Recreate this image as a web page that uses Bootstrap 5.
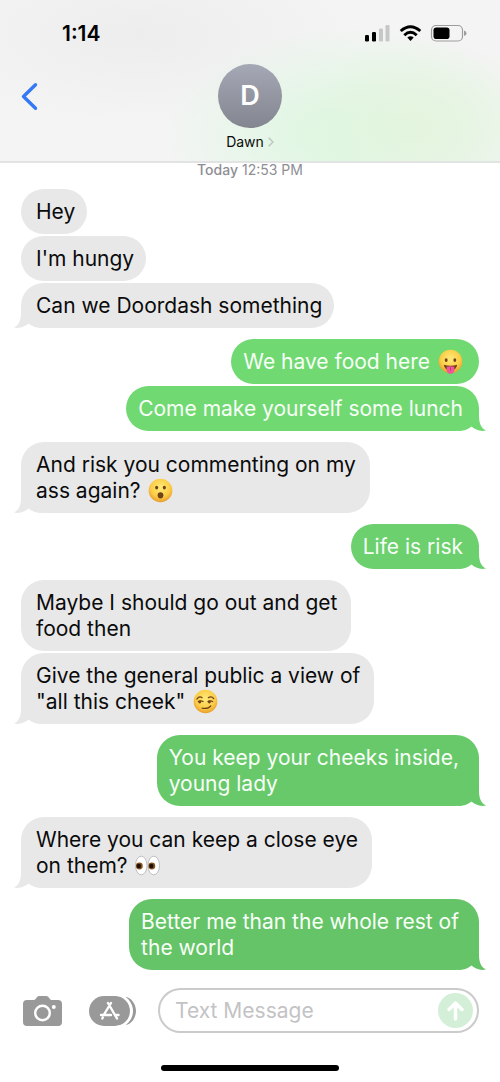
<!DOCTYPE html>
<html lang="en">
<head>
<meta charset="utf-8">
<meta name="viewport" content="width=device-width, initial-scale=1">
<title>Dawn</title>
<link href="https://cdn.jsdelivr.net/npm/bootstrap@5.3.0/dist/css/bootstrap.min.css" rel="stylesheet">
<style>
  body { font-family: Inter, "Liberation Sans", sans-serif; color: #0b0b0b; background: #fff; }
  .topbar {
    border-bottom: 2px solid #e1e4e2;
    background:
      radial-gradient(ellipse 130px 90px at 84% 78%, rgba(228,244,221,.9), transparent),
      radial-gradient(ellipse 190px 110px at 70% 84%, #dff7e2 20%, transparent),
      radial-gradient(ellipse 220px 90px at 28% 22%, #ededed, transparent),
      #f4f4f4;
  }
  .status { padding: 21px 33px 0 62px; height: 46px; }
  .clock { font-size: 21px; line-height: 26px; font-weight: 600; color: #000; }
  .nav-row { display: grid; grid-template-columns: 1fr auto 1fr; padding: 18px 20px 9px; }
  .back { height: 64px; width: 20px; }
  .avatar { width: 64px; height: 64px; font-size: 27px; background: linear-gradient(#a5a8b5, #83858f); }
  .contact { font-size: 14px; line-height: 20px; color: #0b0b0b; margin-top: 4px; }
  .stamp { font-size: 14px; line-height: 14px; color: #8e8e93; padding-bottom: 12px; }
  .thread { padding: 0 21px 18px; gap: 11px; }
  .group-box { gap: 2px; }
  .bubble {
    position: relative; isolation: isolate; font-size: 21px; line-height: 26px; margin: 0;
    padding: 10px 12px 9px 15px; border-radius: 23px; background: var(--tone);
    white-space: nowrap;
  }
  .got { --tone: #e8e8e9; }
  .sent { --tone: #70d972; color: #f8fff8; padding: 10px 16px 9px 12px; }
  .sent.deep-1 { --tone: #6bd06d; }
  .sent.deep-2 { --tone: #67c96a; }
  .sent.deep-3 { --tone: #65c467; }
  .got.wrapped { padding-right: 14px; }
  .sent.wrapped { padding-right: 20px; }
  .tail { position: absolute; z-index: -1; bottom: 0; width: 28px; height: 24px; fill: var(--tone); }
  .got .tail { left: -7px; }
  .sent .tail { right: -7px; transform: scaleX(-1); }
  .emoji { width: 25px; height: 25px; vertical-align: -5px; margin-left: 2px; }
  .composer { padding: 0 21px 32px 23px; }
  .tool { padding: 0; border: 0; background: none; line-height: 0; flex: none; }
  .apps { margin: 0 22px 0 27px; }
  .field { height: 45px; min-width: 0; border: 2px solid #cbcbcb; border-radius: 23px; padding: 0 4px 0 15px; }
  .field input { font-size: 21px; line-height: 26px; min-width: 0; color: #0b0b0b; }
  .field input::placeholder { color: #c3c3c5; opacity: 1; }
  .home { width: 178px; height: 6px; background: #000; margin-bottom: 11px; }
</style>
</head>
<body class="d-flex flex-column min-vh-100">

<svg width="0" height="0" class="position-absolute" aria-hidden="true">
  <defs>
    <radialGradient id="face" cx=".5" cy=".38" r=".62">
      <stop offset="0" stop-color="#ffea7a"/><stop offset=".65" stop-color="#fccd46"/><stop offset="1" stop-color="#e89b2b"/>
    </radialGradient>
    <symbol id="tail" viewBox="0 0 28 24">
      <path d="M7 0V9C7 16 5 21 0 23.500C6 25 11 22.500 14.500 19.500C18 22.500 23 24 28 24V0Z"/>
    </symbol>
  </defs>
</svg>

<header class="topbar">
  <div class="status d-flex justify-content-between align-items-start">
    <span class="clock">1:14</span>
    <svg width="102" height="26" viewBox="0 0 102 26" aria-label="Signal, Wi-Fi and battery" role="img">
      <rect x="0" y="14" width="4" height="6.500" rx="1.300"/>
      <rect x="7" y="11" width="4" height="9.500" rx="1.300"/>
      <g fill="#c6c8c6"><rect x="14" y="7.500" width="4" height="13" rx="1.300"/><rect x="20.500" y="4" width="4" height="16.500" rx="1.300"/></g>
      <g fill="none" stroke="#000" stroke-width="2.900">
        <path d="M35.700 10Q45.500 1.500 55.300 10"/>
        <path d="M39.300 14.200Q45.500 8.500 51.700 14.200"/>
      </g>
      <path d="M42.300 16.600Q45.500 13.800 48.700 16.600L45.500 20Z"/>
      <rect x="66.500" y="4.500" width="31" height="15.500" rx="4.500" fill="none" stroke="#9c9e9c" stroke-width="1.200"/>
      <rect x="68.500" y="6.500" width="16" height="11.500" rx="2.800"/>
      <path d="M99 9.500Q101.500 10 101.500 12.300T99 15Z" fill="#9c9e9c"/>
    </svg>
  </div>
  <div class="nav-row">
    <a href="#" class="back d-flex align-items-center" aria-label="Back">
      <svg width="20" height="30" viewBox="0 0 20 30" fill="none" stroke="#3478f6" stroke-width="3.400" stroke-linecap="round" stroke-linejoin="round"><path d="M15.500 3.800L3.500 15.500L15.500 27.200"/></svg>
    </a>
    <div class="d-flex flex-column align-items-center">
      <div class="avatar rounded-circle d-flex align-items-center justify-content-center text-white fw-semibold">D</div>
      <a href="#" class="contact d-flex align-items-center gap-1 text-decoration-none">Dawn
        <svg width="6" height="10" viewBox="0 0 6 10" fill="none" stroke="#b9c4bb" stroke-width="1.300"><path d="M.7.7L5 5L.7 9.300"/></svg>
      </a>
    </div>
  </div>
</header>

<main>
  <div class="stamp text-center"><span class="fw-medium">Today</span> 12:53 PM</div>
  <div class="thread d-flex flex-column">
    <div class="group-box d-flex flex-column align-items-start">
      <p class="bubble got">Hey</p>
      <p class="bubble got">I'm hungy</p>
      <p class="bubble got">Can we Doordash something<svg class="tail"><use href="#tail"/></svg></p>
    </div>
    <div class="group-box d-flex flex-column align-items-end">
      <p class="bubble sent">We have food here
        <svg class="emoji" viewBox="0 0 26 26" role="img" aria-label="Face with tongue">
          <circle cx="13" cy="13" r="12.300" fill="url(#face)"/>
          <ellipse cx="8.500" cy="11.500" rx="1.500" ry="2" fill="#70421a"/><ellipse cx="17.500" cy="11.500" rx="1.500" ry="2" fill="#70421a"/>
          <path d="M6 16.500Q13 18.500 20 16.500Q19 22.500 13 22.500T6 16.500Z" fill="#70421a"/>
          <path d="M9 18.500Q13 17.500 17 18.500V22Q16.500 25.800 13 25.800T9 22Z" fill="#f0569b"/>
          <path d="M13 19V22.500" stroke="#c93375" stroke-width="1"/>
        </svg></p>
      <p class="bubble sent">Come make yourself some lunch<svg class="tail"><use href="#tail"/></svg></p>
    </div>
    <div class="group-box d-flex flex-column align-items-start">
      <p class="bubble got wrapped">And risk you commenting on my<br>ass again?
        <svg class="emoji" viewBox="0 0 26 26" role="img" aria-label="Face with open mouth">
          <circle cx="13" cy="13" r="12.300" fill="url(#face)"/>
          <ellipse cx="9" cy="10" rx="1.600" ry="2" fill="#70421a"/><ellipse cx="17" cy="10" rx="1.600" ry="2" fill="#70421a"/>
          <ellipse cx="13" cy="18" rx="3" ry="3.200" fill="#70421a"/>
        </svg><svg class="tail"><use href="#tail"/></svg></p>
    </div>
    <div class="group-box d-flex flex-column align-items-end">
      <p class="bubble sent deep-1">Life is risk<svg class="tail"><use href="#tail"/></svg></p>
    </div>
    <div class="group-box d-flex flex-column align-items-start">
      <p class="bubble got wrapped">Maybe I should go out and get<br>food then</p>
      <p class="bubble got wrapped">Give the general public a view of<br>"all this cheek"
        <svg class="emoji" viewBox="0 0 26 26" role="img" aria-label="Smirking face">
          <circle cx="13" cy="13" r="12.300" fill="url(#face)"/>
          <g fill="none" stroke="#70421a" stroke-width="1.300" stroke-linecap="round">
            <path d="M4 10.500Q6.500 7 9.500 9"/><path d="M16 9Q19.500 7 21.500 10"/>
            <path d="M5.500 13Q8 11.500 10.500 13"/><path d="M15.500 13Q18 11.500 20.500 13"/>
            <path d="M9.500 20Q16 21 18.500 17.500"/>
          </g>
          <circle cx="7" cy="13.500" r="1.500" fill="#70421a"/><circle cx="17" cy="13.500" r="1.500" fill="#70421a"/>
        </svg><svg class="tail"><use href="#tail"/></svg></p>
    </div>
    <div class="group-box d-flex flex-column align-items-end">
      <p class="bubble sent deep-2 wrapped">You keep your cheeks inside,<br>young lady<svg class="tail"><use href="#tail"/></svg></p>
    </div>
    <div class="group-box d-flex flex-column align-items-start">
      <p class="bubble got wrapped">Where you can keep a close eye<br>on them?
        <svg class="emoji" viewBox="0 0 26 26" role="img" aria-label="Eyes">
          <g fill="#fff" stroke="#bdbdbf" stroke-width="1"><ellipse cx="6.500" cy="13" rx="6" ry="9.700"/><ellipse cx="19.500" cy="13" rx="6" ry="9.700"/></g>
          <circle cx="4.500" cy="13.500" r="3.600" fill="#8a5420"/><circle cx="17.500" cy="13.500" r="3.600" fill="#8a5420"/>
          <circle cx="4" cy="13.500" r="2.300" fill="#1d1007"/><circle cx="17" cy="13.500" r="2.300" fill="#1d1007"/>
        </svg><svg class="tail"><use href="#tail"/></svg></p>
    </div>
    <div class="group-box d-flex flex-column align-items-end">
      <p class="bubble sent deep-3 wrapped">Better me than the whole rest of<br>the world<svg class="tail"><use href="#tail"/></svg></p>
    </div>
  </div>
</main>

<footer class="mt-auto">
  <form class="composer d-flex align-items-center">
    <button type="button" class="tool" aria-label="Camera">
      <svg width="39" height="32" viewBox="0 0 39 32">
        <path d="M4 5H10.500Q12 5 13 3.500L14 2Q15 1 16.500 1H23Q24.500 1 25.500 2L26.500 3.500Q27.500 5 29 5H35Q39 5 39 9V27Q39 31 35 31H4Q0 31 0 27V9Q0 5 4 5Z" fill="#999"/>
        <circle cx="19.500" cy="18" r="7.300" fill="none" stroke="#fff" stroke-width="2.400"/><circle cx="30.800" cy="12" r="2" fill="#fff"/>
      </svg>
    </button>
    <button type="button" class="tool apps" aria-label="Apps">
      <svg width="47" height="32" viewBox="0 0 47 32">
        <path d="M36 2C42 2 47 9 47 16S42 30 36 30C41 27 44 22 44 16S41 5 36 2Z" fill="#999"/>
        <rect x="0" y="1" width="41" height="30" rx="15" fill="#999" stroke="#fff" stroke-width="0"/>
        <path d="M27 0C37 0 42.200 8 42.200 16S37 32 27 32" fill="none" stroke="#fff" stroke-width="2"/>
        <g stroke="#fff" stroke-width="2.400" stroke-linecap="round" fill="none">
          <path d="M22 8L15 19.500M19 8L28 23.500M12 20H22M26.500 20H29.500M13.800 22.500L13.300 23.500"/>
        </g>
      </svg>
    </button>
    <div class="field d-flex align-items-center flex-grow-1">
      <input type="text" class="border-0 bg-transparent p-0 flex-grow-1" placeholder="Text Message" aria-label="Text Message">
      <button type="submit" class="tool" aria-label="Send">
        <svg width="35" height="35" viewBox="0 0 35 35"><circle cx="17.500" cy="17.500" r="17.500" fill="#d3efd8"/><path d="M17.500 26V10.500M11 16.500L17.500 10L24 16.500" fill="none" stroke="#fff" stroke-width="3.400" stroke-linecap="round" stroke-linejoin="round"/></svg>
      </button>
    </div>
  </form>
  <div class="home rounded-pill mx-auto"></div>
</footer>
<script src="https://cdn.jsdelivr.net/npm/bootstrap@5.3.0/dist/js/bootstrap.bundle.min.js"></script>
</body>
</html>
